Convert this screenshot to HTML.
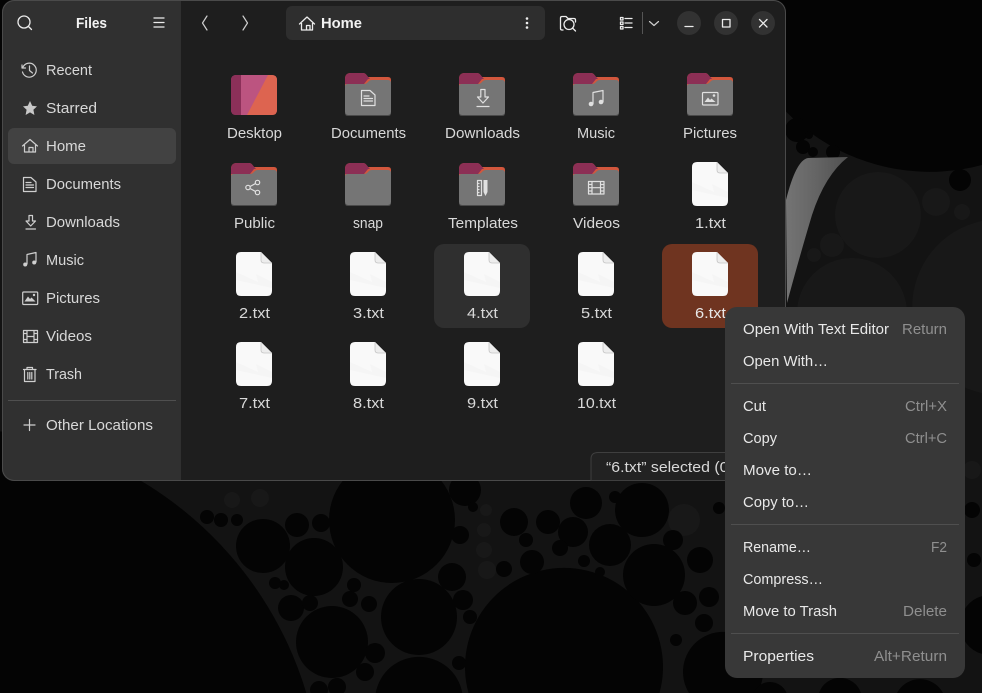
<!DOCTYPE html>
<html><head><meta charset="utf-8"><title>Files</title>
<style>
html,body{margin:0;padding:0;background:#040404;width:982px;height:693px;overflow:hidden}
svg{display:block}
text{font-family:"Liberation Sans",sans-serif;font-size:15px;fill:#e6e6e6}
.b{font-weight:bold;fill:#f2f2f2}
.d{fill:#8f8f8f}
.m{fill:#e8e8e8}
.l{fill:#d8d8d8}
.ic{fill:none;stroke:#cfcfcf;stroke-width:1.200;stroke-linecap:round;stroke-linejoin:round}
.ih{fill:none;stroke:#ececec;stroke-width:1.300;stroke-linecap:round;stroke-linejoin:round}
.fi{fill:none;stroke:#e0e0e0;stroke-width:1.200;stroke-linejoin:round;stroke-linecap:round}
</style></head><body>
<svg width="982" height="693" viewBox="0 0 982 693" xmlns="http://www.w3.org/2000/svg">
<defs>
<clipPath id="win"><rect x="2" y="0" width="784" height="481" rx="12"/></clipPath>
<linearGradient id="fin" x1="0" x2="1" y1="0" y2="0"><stop offset="0" stop-color="#747474"/><stop offset=".5" stop-color="#646464"/><stop offset="1" stop-color="#505050"/></linearGradient>
<g id="folder">
<path d="M0 6Q0 0 6 0H18Q20 0 21.500 2L23 4H43Q46 4 46 7V14H0Z" fill="#d2573d"/>
<path d="M0 6Q0 0 6 0H18Q20 0 21.500 2L25 6H23L19 11H0Z" fill="#8c2f55"/>
<path d="M0 13Q0 11 3 11H19Q21 11 22 10L24 8Q25 7 27 7H43Q46 7 46 10V39Q46 42 43 42H3Q0 42 0 39Z" fill="#757575"/>
<path d="M0 39Q0 42 3 42H43Q46 42 46 39V40.500Q46 43 43 43H3Q0 43 0 40.500Z" fill="#4a4a4a"/>
</g>
<g id="file">
<path d="M5 0H25L36 11V39Q36 44 31 44H5Q0 44 0 39V5Q0 0 5 0Z" fill="#f9f9f9"/>
<path d="M0 20L22 30L20 22L36 30V36L0 28Z" fill="#f5f5f5"/>
<path d="M25 0V8Q25 11 28 11H36Z" fill="#ededed"/>
<path d="M25 0V8Q25 11 28 11H36" fill="none" stroke="#c4c4c4" stroke-width=".8"/>
</g>
</defs>

<!-- wallpaper -->
<rect width="982" height="693" fill="#131313"/>
<g fill="#181818">
<circle cx="878" cy="215" r="43"/><circle cx="852" cy="313" r="55"/>
<path d="M982 220.900A88 88 0 0 0 982 393.100Z"/>
<circle cx="936" cy="202" r="14"/><circle cx="962" cy="212" r="8"/><circle cx="832" cy="245" r="12"/><circle cx="814" cy="255" r="7"/>
<circle cx="484" cy="550" r="8"/><circle cx="487" cy="570" r="9"/><circle cx="484" cy="530" r="7"/><circle cx="486" cy="510" r="6"/>
<circle cx="684" cy="520" r="16"/><circle cx="232" cy="500" r="8"/><circle cx="260" cy="498" r="9"/><circle cx="972" cy="335" r="9"/><circle cx="972" cy="470" r="9"/>
</g>
<!-- big black circles -->
<g fill="#040404">
<rect x="0" y="0" width="982" height="60"/>
<path d="M730.200 0A202 202 0 0 0 982 165V0Z"/>
<path d="M0 693H306.300A372 372 0 0 0 0 431.400Z"/>
<circle cx="392" cy="520" r="63"/>
<path d="M468.500 693A99 99 0 1 1 659.500 693Z"/>
<circle cx="263" cy="546" r="27"/><circle cx="314" cy="567" r="29"/>
<circle cx="332" cy="642" r="36"/><circle cx="419" cy="617" r="38"/><circle cx="642" cy="510" r="27"/><circle cx="654" cy="575" r="31"/>
<circle cx="610" cy="545" r="21"/><circle cx="586" cy="503" r="16"/><circle cx="573" cy="532" r="15"/><circle cx="548" cy="522" r="12"/>
<circle cx="514" cy="522" r="14"/><circle cx="532" cy="562" r="12"/><circle cx="452" cy="577" r="14"/><circle cx="463" cy="600" r="10"/>
<circle cx="470" cy="617" r="7"/><circle cx="297" cy="525" r="12"/><circle cx="321" cy="523" r="9"/><circle cx="207" cy="517" r="7"/>
<circle cx="221" cy="520" r="7"/><circle cx="237" cy="520" r="6"/><circle cx="465" cy="490" r="16"/><circle cx="291" cy="608" r="13"/>
<circle cx="310" cy="603" r="8"/><circle cx="350" cy="599" r="8"/><circle cx="369" cy="604" r="8"/><circle cx="354" cy="585" r="7"/>
<circle cx="275" cy="583" r="6"/><circle cx="284" cy="585" r="5"/><circle cx="375" cy="653" r="10"/><circle cx="365" cy="672" r="9"/>
<path d="M375.700 693A44 44 0 0 1 462.300 693Z"/>
<path d="M310.500 693A9 9 0 1 1 327.500 693Z"/><path d="M330.300 693A9 9 0 1 1 343.700 693Z"/>
<circle cx="459" cy="663" r="7"/>
<circle cx="673" cy="540" r="10"/><circle cx="700" cy="560" r="13"/><circle cx="685" cy="603" r="12"/><circle cx="709" cy="597" r="10"/>
<circle cx="704" cy="623" r="9"/>
<path d="M689 693A40 40 0 1 1 757 693Z"/>
<circle cx="676" cy="640" r="6"/><circle cx="504" cy="569" r="8"/>
<circle cx="560" cy="548" r="8"/><circle cx="584" cy="561" r="6"/><circle cx="526" cy="540" r="7"/><circle cx="600" cy="572" r="5"/>
<circle cx="615" cy="497" r="6"/><circle cx="719" cy="508" r="6"/><circle cx="473" cy="507" r="5"/><circle cx="460" cy="535" r="9"/>
<circle cx="960" cy="180" r="11"/><circle cx="797" cy="130" r="12"/><circle cx="803" cy="147" r="7"/><circle cx="809" cy="135" r="4"/>
<circle cx="813" cy="152" r="5"/><circle cx="833" cy="152" r="7"/>
<path d="M982 596.100A30 30 0 0 0 982 653.900Z"/>
<circle cx="972" cy="510" r="8"/><circle cx="974" cy="560" r="7"/>
<path d="M819.100 693A22 22 0 0 1 860.900 693Z"/><path d="M897 693A26 26 0 0 1 943 693Z"/><path d="M753.400 693A18 18 0 0 1 786.600 693Z"/>
</g>
<path d="M786 200Q796 160 808 158L848 157Q825 175 812 215Q800 255 787 303Z" fill="url(#fin)"/>

<!-- window -->
<g clip-path="url(#win)">
<rect x="2" y="0" width="784" height="481" fill="#1e1e1e"/>
<rect x="2" y="0" width="179" height="481" fill="#303030"/>
</g>
<rect x="2.500" y="0.500" width="783" height="480" rx="12" fill="none" stroke="#4a4a4a" stroke-width="1"/>

<!-- sidebar header -->
<circle cx="24" cy="22" r="6" class="ih"/><path d="M28.500 26.500L31.500 29.500" class="ih"/>
<text x="76" y="28" class="b" textLength="31" lengthAdjust="spacingAndGlyphs">Files</text>
<path d="M154 18H164M154 22.500H164M154 27H164" class="ih" stroke-width="1.100"/>

<rect x="8" y="128" width="168" height="36" rx="6" fill="#424242"/>

<!-- sidebar icons -->
<path d="M23 67A7 7 0 1 1 22.500 72M22 65V68H25.500M29.500 66V70.500L32.500 73" class="ic"/>
<path d="M30 101L32.200 105.800L37 106.400L33.400 109.800L34.400 115L30 112.400L25.600 115L26.600 109.800L23 106.400L27.800 105.800Z" fill="#c8c8c8"/>
<path d="M22.500 146L30 139.500L37.500 146M24.500 145V152H35.500V145M29 152V147.500H33V152" class="ic"/>
<path d="M23.500 177.500H31L36 182V191.500H23.500ZM26 182.500H31M26 185H33.500M26 187.500H33.500" class="ic" stroke-width="1.100"/>
<path d="M29 215.500H32.500V221H35.500L30.700 226L26 221H29ZM26 229H35.500" class="ic" stroke-width="1.100"/>
<path d="M27 264V254.500L36 252.500V262" class="ic"/><circle cx="25.200" cy="264.500" r="2" fill="#cfcfcf"/><circle cx="34.200" cy="262.500" r="2" fill="#cfcfcf"/>
<rect x="22.700" y="292" width="15" height="12.500" rx="1" class="ic"/><path d="M24.500 301.500L28 296.500L30 299L31.500 297.500L35.500 301.500Z" fill="#cfcfcf"/><circle cx="34" cy="295" r="1.200" fill="#cfcfcf"/>
<path d="M23.500 330.500H37.500V342.500H23.500ZM27 330.500V342.500M34 330.500V342.500M27 336.500H34M23.500 333.500H27M23.500 339.500H27M34 333.500H37.500M34 339.500H37.500" class="ic" stroke-width="1.100"/>
<path d="M23.500 369.500H36M27 369.500V367.500H32.500V369.500M24.500 369.500V381.500H35V369.500M27.800 372.500V379M29.800 372.500V379M31.800 372.500V379" class="ic" stroke-width="1.100"/>
<path d="M24 425H35M29.500 419.500V430.500" class="ic" stroke-width="1.100"/>

<text x="46" y="75" class="l" textLength="46" lengthAdjust="spacingAndGlyphs">Recent</text>
<text x="46" y="113" class="l" textLength="51" lengthAdjust="spacingAndGlyphs">Starred</text>
<text x="46" y="151" class="l" textLength="40" lengthAdjust="spacingAndGlyphs">Home</text>
<text x="46" y="189" class="l" textLength="75" lengthAdjust="spacingAndGlyphs">Documents</text>
<text x="46" y="227" class="l" textLength="74" lengthAdjust="spacingAndGlyphs">Downloads</text>
<text x="46" y="265" class="l" textLength="38" lengthAdjust="spacingAndGlyphs">Music</text>
<text x="46" y="303" class="l" textLength="54" lengthAdjust="spacingAndGlyphs">Pictures</text>
<text x="46" y="341" class="l" textLength="46" lengthAdjust="spacingAndGlyphs">Videos</text>
<text x="46" y="379" class="l" textLength="36" lengthAdjust="spacingAndGlyphs">Trash</text>
<rect x="8" y="400" width="168" height="1" fill="#4f4f4f"/>
<text x="46" y="430" class="l" textLength="107" lengthAdjust="spacingAndGlyphs">Other Locations</text>

<!-- header bar -->
<path d="M207 16L202.500 23L207 30" class="ic" stroke-width="1.100"/>
<path d="M243 16L247.500 23L243 30" class="ic" stroke-width="1.100"/>
<rect x="286" y="6" width="259" height="34" rx="6" fill="#2e2e2e"/>
<path d="M299.500 24L307 17L314.500 24M301.500 23V30H312.500V23M306.500 30V25.500H310V30" class="ih"/>
<text x="321" y="28" class="b" textLength="41" lengthAdjust="spacingAndGlyphs">Home</text>
<circle cx="527" cy="18.500" r="1.300" fill="#eee"/><circle cx="527" cy="23" r="1.300" fill="#eee"/><circle cx="527" cy="27.500" r="1.300" fill="#eee"/>
<path d="M563 30H562Q560.500 30 560.500 28.500V18Q560.500 16.500 562 16.500H566L568 18.500H574Q575.500 18.500 575.500 20V22" class="ih" stroke-width="1.100"/>
<circle cx="569" cy="24.500" r="5" class="ih" stroke-width="1.100"/><path d="M572.500 28L575.500 31" class="ih" stroke-width="1.100"/>
<path d="M620.500 17.500H623V20H620.500ZM620.500 22H623V24.500H620.500ZM620.500 26.500H623V29H620.500ZM625 18.500H632M625 23H632M625 27.500H632" class="ih" stroke-width="1" fill="none"/>
<rect x="642" y="12" width="1" height="22" fill="#555"/>
<path d="M649.500 21.500L654 25.500L658.500 21.500" class="ic" stroke-width="1.100"/>
<circle cx="689" cy="23" r="12" fill="#323232"/><circle cx="726" cy="23" r="12" fill="#323232"/><circle cx="763" cy="23" r="12" fill="#323232"/>
<path d="M685 26.500H693" class="ih"/>
<rect x="722.500" y="19.500" width="7.500" height="7.500" class="ih" stroke-linecap="square"/>
<path d="M759.500 19.500L767 27M767 19.500L759.500 27" class="ih" stroke-width="1.400"/>

<!-- selection -->
<rect x="434" y="244" width="96" height="84" rx="10" fill="#2f2f2f"/>
<rect x="662" y="244" width="96" height="84" rx="10" fill="#6f3420"/>

<!-- desktop icon -->
<g>
<rect x="231" y="75" width="46" height="40" rx="5" fill="#bc5480"/>
<path d="M247 115L268 75H272Q277 75 277 80V110Q277 115 272 115Z" fill="#dd6450"/>
<path d="M236 75H241V115H236Q231 115 231 110V80Q231 75 236 75Z" fill="#8c3059"/>
</g>

<!-- folders -->
<use href="#folder" x="345" y="73"/>
<path transform="translate(345 73)" d="M16.500 17.500H25L30 22V32.500H16.500ZM19 23H24M19 25.500H27.500M19 28H27.500" class="fi"/>
<use href="#folder" x="459" y="73"/>
<path transform="translate(459 73)" d="M21.800 16.500H26V24H29.500L24 30L18.500 24H21.800ZM18 33.500H30" class="fi"/>
<use href="#folder" x="573" y="73"/>
<g transform="translate(573 73)"><path d="M20 31V19.500L30 17.500V29" class="fi" stroke-width="1.600"/><circle cx="18" cy="31" r="2.300" fill="#e0e0e0"/><circle cx="28" cy="29" r="2.300" fill="#e0e0e0"/></g>
<use href="#folder" x="687" y="73"/>
<g transform="translate(687 73)"><rect x="15.500" y="19.500" width="15.500" height="12.500" rx="1" class="fi"/><path d="M17.500 29L21 24.500L23 27L24.500 25.500L28.500 29Z" fill="#e0e0e0"/><circle cx="27" cy="22.500" r="1.300" fill="#e0e0e0"/></g>

<use href="#folder" x="231" y="163"/>
<g transform="translate(231 163)"><circle cx="17" cy="24.500" r="2.200" class="fi" stroke-width="1"/><circle cx="26.500" cy="19.500" r="2.200" class="fi" stroke-width="1"/><circle cx="26.500" cy="29.500" r="2.200" class="fi" stroke-width="1"/><path d="M19 23.500L24.500 20.500M19 25.500L24.500 28.500" class="fi" stroke-width="1"/></g>
<use href="#folder" x="345" y="163"/>
<use href="#folder" x="459" y="163"/>
<g transform="translate(459 163)"><path d="M18.500 17.500H22.500V32.500H18.500ZM18.500 20.500H20M18.500 23.500H20M18.500 26.500H20M18.500 29.500H20" class="fi" stroke-width="1"/><path d="M24.500 17H28.500V29L26.500 33L24.500 29Z" fill="#e0e0e0"/></g>
<use href="#folder" x="573" y="163"/>
<path transform="translate(573 163)" d="M15.500 18.500H31V31H15.500ZM19 18.500V31M27.500 18.500V31M19 24.700H27.500M15.500 21.500H19M15.500 24.700H19M15.500 28H19M27.500 21.500H31M27.500 24.700H31M27.500 28H31" class="fi" stroke-width="1.100"/>

<!-- files -->
<use href="#file" x="692" y="162"/>
<use href="#file" x="236" y="252"/><use href="#file" x="350" y="252"/><use href="#file" x="464" y="252"/><use href="#file" x="578" y="252"/><use href="#file" x="692" y="252"/>
<use href="#file" x="236" y="342"/><use href="#file" x="350" y="342"/><use href="#file" x="464" y="342"/><use href="#file" x="578" y="342"/>

<!-- labels -->
<text x="227" y="138" class="l" textLength="55" lengthAdjust="spacingAndGlyphs">Desktop</text>
<text x="331" y="138" class="l" textLength="75" lengthAdjust="spacingAndGlyphs">Documents</text>
<text x="445" y="138" class="l" textLength="75" lengthAdjust="spacingAndGlyphs">Downloads</text>
<text x="577" y="138" class="l" textLength="38" lengthAdjust="spacingAndGlyphs">Music</text>
<text x="683" y="138" class="l" textLength="54" lengthAdjust="spacingAndGlyphs">Pictures</text>
<text x="234" y="228" class="l" textLength="41" lengthAdjust="spacingAndGlyphs">Public</text>
<text x="353" y="228" class="l" textLength="30" lengthAdjust="spacingAndGlyphs">snap</text>
<text x="448" y="228" class="l" textLength="70" lengthAdjust="spacingAndGlyphs">Templates</text>
<text x="573" y="228" class="l" textLength="47" lengthAdjust="spacingAndGlyphs">Videos</text>
<text x="695" y="228" class="l" textLength="31" lengthAdjust="spacingAndGlyphs">1.txt</text>
<text x="239" y="318" class="l" textLength="31" lengthAdjust="spacingAndGlyphs">2.txt</text>
<text x="353" y="318" class="l" textLength="31" lengthAdjust="spacingAndGlyphs">3.txt</text>
<text x="467" y="318" class="l" textLength="31" lengthAdjust="spacingAndGlyphs">4.txt</text>
<text x="581" y="318" class="l" textLength="31" lengthAdjust="spacingAndGlyphs">5.txt</text>
<text x="695" y="318" class="m" textLength="31" lengthAdjust="spacingAndGlyphs">6.txt</text>
<text x="239" y="408" class="l" textLength="31" lengthAdjust="spacingAndGlyphs">7.txt</text>
<text x="353" y="408" class="l" textLength="31" lengthAdjust="spacingAndGlyphs">8.txt</text>
<text x="467" y="408" class="l" textLength="31" lengthAdjust="spacingAndGlyphs">9.txt</text>
<text x="577" y="408" class="l" textLength="39" lengthAdjust="spacingAndGlyphs">10.txt</text>

<!-- status -->
<path d="M591 480.500V459Q591 452.500 598 452.500H730V480.500Z" fill="#222" stroke="#3f3f3f"/>
<text x="606" y="472" class="l" textLength="170" lengthAdjust="spacingAndGlyphs">“6.txt” selected  (0 bytes)</text>

<!-- context menu -->
<rect x="725" y="307" width="240" height="371" rx="12" fill="#383838"/>
<g fill="#4f4f4f"><rect x="731" y="383" width="228" height="1"/><rect x="731" y="524" width="228" height="1"/><rect x="731" y="633" width="228" height="1"/></g>
<text x="743" y="334" class="m" textLength="146" lengthAdjust="spacingAndGlyphs">Open With Text Editor</text>
<text x="902" y="334" class="d" textLength="45" lengthAdjust="spacingAndGlyphs">Return</text>
<text x="743" y="366" class="m" textLength="85" lengthAdjust="spacingAndGlyphs">Open With…</text>
<text x="743" y="411" class="m" textLength="23" lengthAdjust="spacingAndGlyphs">Cut</text>
<text x="905" y="411" class="d" textLength="42" lengthAdjust="spacingAndGlyphs">Ctrl+X</text>
<text x="743" y="443" class="m" textLength="34" lengthAdjust="spacingAndGlyphs">Copy</text>
<text x="905" y="443" class="d" textLength="42" lengthAdjust="spacingAndGlyphs">Ctrl+C</text>
<text x="743" y="475" class="m" textLength="69" lengthAdjust="spacingAndGlyphs">Move to…</text>
<text x="743" y="507" class="m" textLength="66" lengthAdjust="spacingAndGlyphs">Copy to…</text>
<text x="743" y="552" class="m" textLength="68" lengthAdjust="spacingAndGlyphs">Rename…</text>
<text x="931" y="552" class="d" textLength="16" lengthAdjust="spacingAndGlyphs">F2</text>
<text x="743" y="584" class="m" textLength="80" lengthAdjust="spacingAndGlyphs">Compress…</text>
<text x="743" y="616" class="m" textLength="94" lengthAdjust="spacingAndGlyphs">Move to Trash</text>
<text x="903" y="616" class="d" textLength="44" lengthAdjust="spacingAndGlyphs">Delete</text>
<text x="743" y="661" class="m" textLength="71" lengthAdjust="spacingAndGlyphs">Properties</text>
<text x="874" y="661" class="d" textLength="73" lengthAdjust="spacingAndGlyphs">Alt+Return</text>
</svg>
</body></html>
